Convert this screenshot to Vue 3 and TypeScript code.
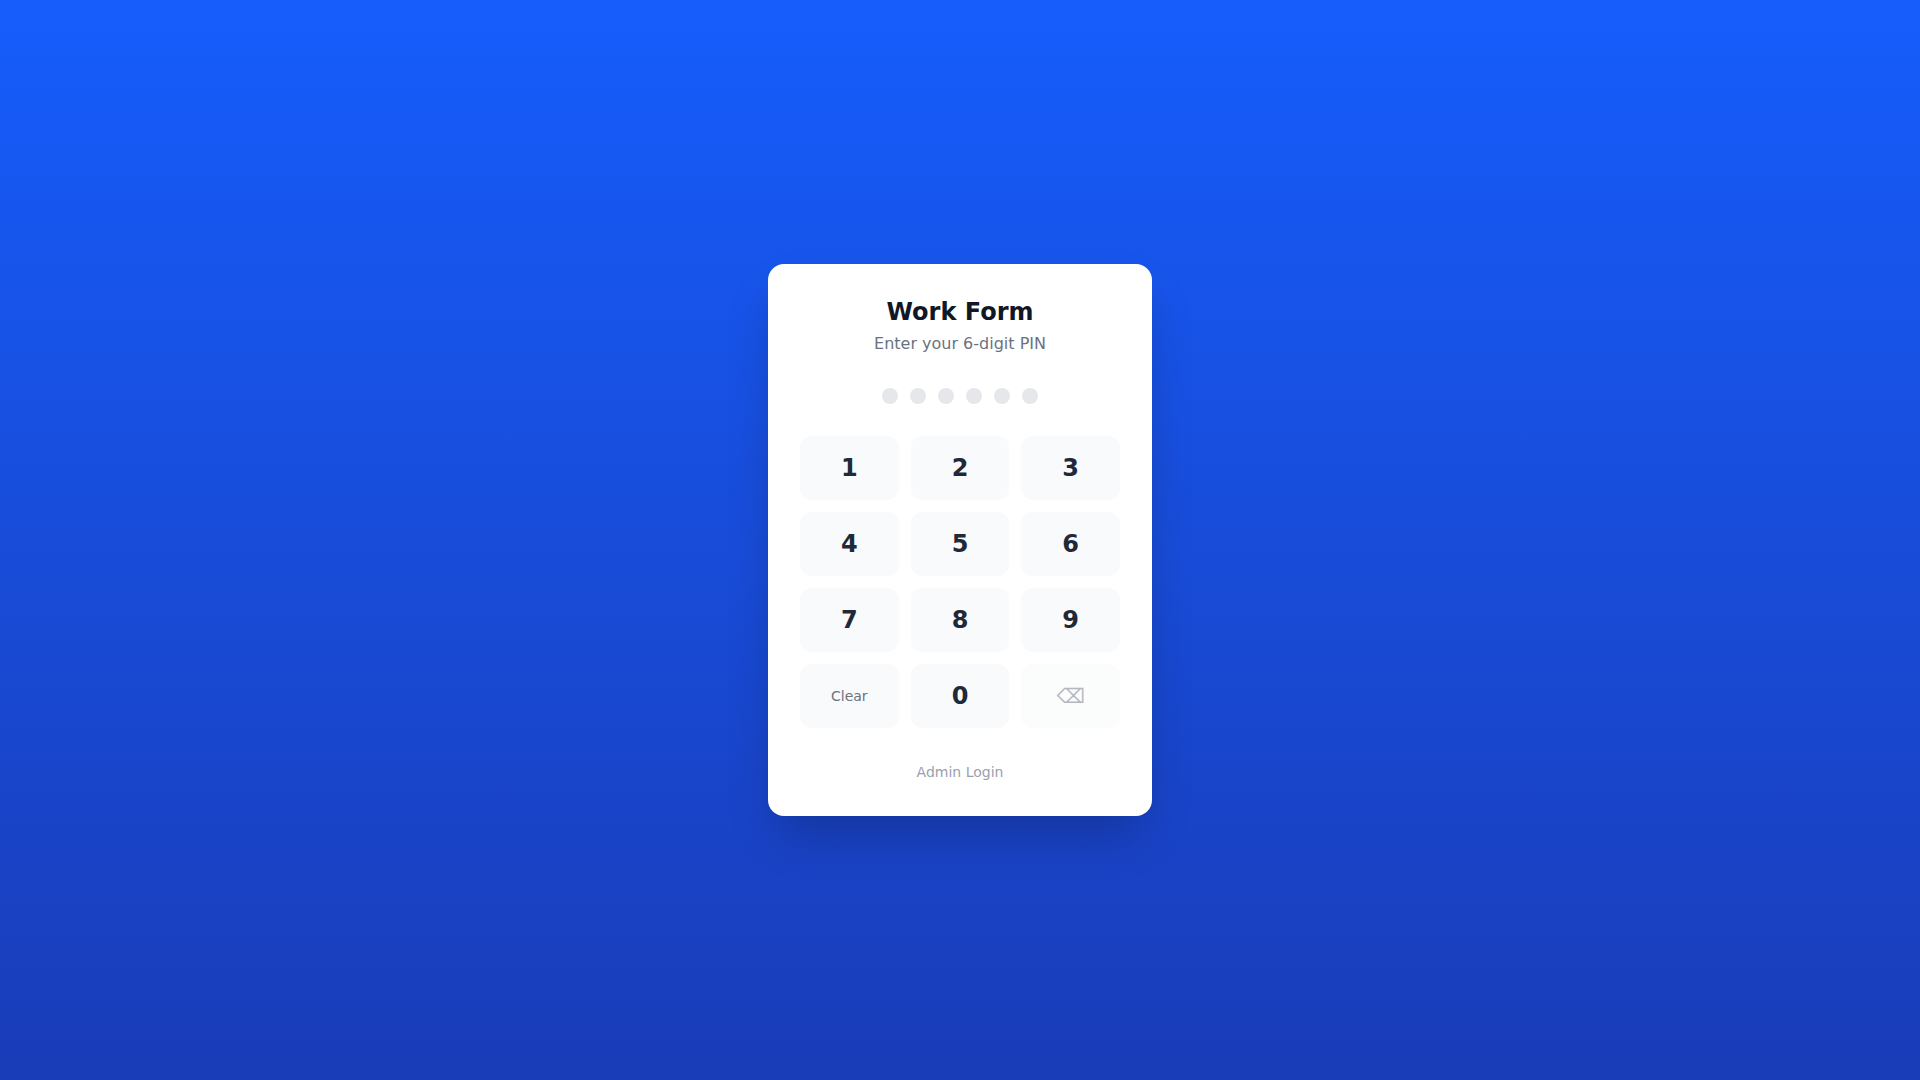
<script setup lang="ts">
import { ref } from 'vue'

const PIN_LENGTH = 6
const digits: string[] = ['1', '2', '3', '4', '5', '6', '7', '8', '9']
const pin = ref<string>('')

function press(digit: string): void {
  if (pin.value.length < PIN_LENGTH) pin.value += digit
}

function clear(): void {
  pin.value = ''
}

function erase(): void {
  pin.value = pin.value.slice(0, -1)
}
</script>

<template>
  <main class="screen">
    <section class="card">
      <header class="heading">
        <h1>Work Form</h1>
        <p>Enter your 6-digit PIN</p>
      </header>

      <div class="dots">
        <span
          v-for="n in PIN_LENGTH"
          :key="n"
          class="dot"
          :class="{ filled: n <= pin.length }"
        ></span>
      </div>

      <div class="keypad">
        <button v-for="d in digits" :key="d" type="button" class="key" @click="press(d)">
          {{ d }}
        </button>
        <button type="button" class="key clear" @click="clear">Clear</button>
        <button type="button" class="key" @click="press('0')">0</button>
        <button
          type="button"
          class="key erase"
          aria-label="Delete"
          :disabled="pin.length === 0"
          @click="erase"
        >
          ⌫
        </button>
      </div>

      <footer class="footer">
        <a href="#admin">Admin Login</a>
      </footer>
    </section>
  </main>
</template>

<style>
body {
  margin: 0;
}
</style>

<style scoped>
.screen {
  box-sizing: border-box;
  min-height: 100vh;
  padding: 16px;
  display: flex;
  align-items: center;
  justify-content: center;
  background: linear-gradient(to bottom in oklab, #155dfc, #193cb8);
  font-family: 'DejaVu Sans', sans-serif;
  font-size: 16px;
  line-height: 24px;
}

.card {
  box-sizing: border-box;
  width: 100%;
  max-width: 384px;
  padding: 32px;
  border-radius: 16px;
  background: #fff;
  box-shadow: 0 25px 50px -12px rgb(0 0 0 / 25%);
}

.heading {
  margin-bottom: 32px;
  text-align: center;
}

h1 {
  margin: 0;
  font-size: 24px;
  line-height: 32px;
  font-weight: 700;
  color: #101828;
}

p {
  margin: 4px 0 0;
  color: #6a7282;
}

.dots {
  display: flex;
  justify-content: center;
  gap: 12px;
  margin-bottom: 32px;
}

.dot {
  width: 16px;
  height: 16px;
  border-radius: 50%;
  background: #e5e7eb;
}

.dot.filled {
  background: #155dfc;
}

.keypad {
  display: grid;
  grid-template-columns: repeat(3, 1fr);
  gap: 12px;
}

.key {
  height: 64px;
  padding: 0;
  border: 0;
  border-radius: 12px;
  background: #f9fafb;
  color: #1e2939;
  font-family: inherit;
  font-size: 24px;
  line-height: 32px;
  font-weight: 600;
  cursor: pointer;
}

.key.clear {
  color: #6a7282;
  font-size: 14px;
  line-height: 20px;
  font-weight: 400;
}

.key.erase {
  color: #6a7282;
  font-size: 20px;
  line-height: 28px;
  font-weight: 400;
}

.key:disabled {
  opacity: 0.5;
  cursor: default;
}

.footer {
  margin-top: 32px;
  text-align: center;
}

.footer a {
  color: #99a1af;
  font-size: 14px;
  line-height: 20px;
  text-decoration: none;
}
</style>
